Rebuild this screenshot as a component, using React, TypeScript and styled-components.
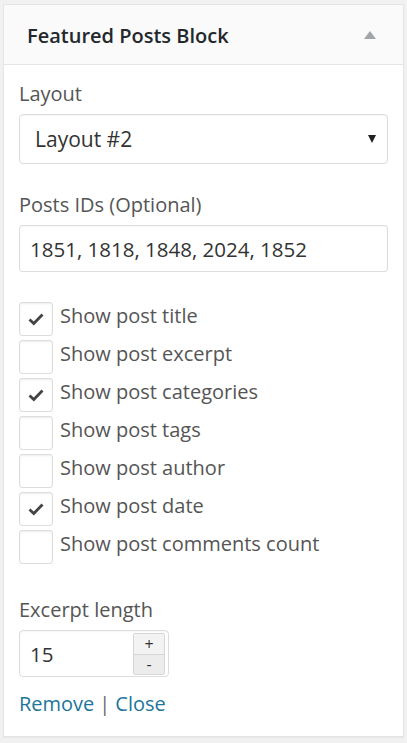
import React from "react";
import styled, { createGlobalStyle } from "styled-components";

const Global = createGlobalStyle`
  html, body { margin: 0; padding: 0; background: #f1f1f1; }
  body { font-family: "Open Sans", "Noto Sans", sans-serif; color: #444; }
  * { box-sizing: border-box; }
`;

const Page = styled.div`
  padding: 4px 3px 6px 3px;
  height: 743px;
`;

const Panel = styled.div`
  background: #fff;
  border: 1px solid #e5e5e5;
  box-shadow: 0 1px 1px rgba(0, 0, 0, 0.04);
  width: 401px;
  height: 733px;
  display: flex;
  flex-direction: column;
`;

const Header = styled.div`
  height: 60px;
  background: #fafafa;
  border-bottom: 1px solid #e5e5e5;
  display: flex;
  align-items: center;
  justify-content: space-between;
  padding: 1px 24px 0 23px;
`;

const Title = styled.h3`
  margin: 0;
  font-size: 20px;
  font-weight: 600;
  color: #23282d;
`;

const Toggle = styled.span`
  width: 0;
  height: 0;
  border-left: 6px solid transparent;
  border-right: 6px solid transparent;
  border-bottom: 8px solid #a0a5aa;
  margin-right: 3px;
`;

const Body = styled.div`
  padding: 15px 15px 0 15px;
  display: flex;
  flex-direction: column;
`;

const Label = styled.div<{ $top?: number }>`
  font-size: 20px;
  line-height: 27px;
  color: #555;
  margin-top: ${(p) => p.$top ?? 0}px;
  margin-bottom: 7px;
`;

const SelectBox = styled.div`
  height: 50px;
  border: 1px solid #ddd;
  border-radius: 4px;
  box-shadow: inset 0 1px 2px rgba(0, 0, 0, 0.04);
  display: flex;
  align-items: center;
  justify-content: space-between;
  padding: 0 11px 0 15px;
  font-size: 21px;
  color: #333;
`;

const Arrow = styled.span`
  width: 0;
  height: 0;
  border-left: 4.5px solid transparent;
  border-right: 4.5px solid transparent;
  border-top: 8px solid #222;
`;

const TextInput = styled.div`
  height: 47px;
  border: 1px solid #ddd;
  border-radius: 3px;
  box-shadow: inset 0 1px 2px rgba(0, 0, 0, 0.04);
  display: flex;
  align-items: center;
  padding: 0 10px;
  font-size: 20.5px;
  color: #333;
`;

const Checks = styled.div`
  margin-top: 30px;
  display: flex;
  flex-direction: column;
  gap: 4px;
`;

const CheckRow = styled.div`
  display: flex;
  align-items: center;
  gap: 7px;
  height: 34px;
`;

const Box = styled.span`
  width: 34px;
  height: 34px;
  border: 1px solid #ddd;
  border-radius: 3px;
  box-shadow: inset 0 1px 2px rgba(0, 0, 0, 0.08);
  display: flex;
  align-items: center;
  justify-content: center;
  flex-shrink: 0;
`;

const CheckText = styled.span`
  font-size: 20px;
  color: #555;
  line-height: 26px;
  margin-top: -7px;
`;

const NumberWrap = styled.div`
  width: 150px;
  height: 47px;
  border: 1px solid #ddd;
  border-radius: 4px;
  box-shadow: inset 0 1px 2px rgba(0, 0, 0, 0.04);
  display: flex;
  align-items: center;
  justify-content: space-between;
  padding: 2px 3px 2px 10px;
`;

const NumberValue = styled.span`
  font-size: 20.5px;
  color: #333;
`;

const Spinner = styled.div`
  width: 32px;
  height: 42px;
  display: flex;
  flex-direction: column;
  border: 1px solid #d6d6d6;
  border-radius: 2px;
`;

const SpinBtn = styled.span<{ $bottom?: boolean }>`
  height: 20px;
  display: flex;
  align-items: center;
  justify-content: center;
  background: ${(p) => (p.$bottom ? "#ececec" : "#f3f3f3")};
  border-top: ${(p) => (p.$bottom ? "1px solid #d6d6d6" : "none")};
  font-size: 16px;
  line-height: 16px;
  color: #333;
`;

const Links = styled.div`
  margin-top: 13px;
  font-size: 20px;
  color: #555;
`;

const Link = styled.a`
  color: #21759b;
  text-decoration: none;
`;

const Sep = styled.span`
  margin: 0 5px;
  color: #666;
`;

const Check = () => (
  <svg width="16" height="14" viewBox="0 0 16 14">
    <path d="M1.5 7.5 L5.8 11.5 L14.5 2.5" fill="none" stroke="#444" strokeWidth="2.8" />
  </svg>
);

const options: [string, boolean][] = [
  ["Show post title", true],
  ["Show post excerpt", false],
  ["Show post categories", true],
  ["Show post tags", false],
  ["Show post author", false],
  ["Show post date", true],
  ["Show post comments count", false],
];

export default function App() {
  return (
    <>
      <Global />
      <Page>
        <Panel>
          <Header>
            <Title>Featured Posts Block</Title>
            <Toggle />
          </Header>
          <Body>
            <Label>Layout</Label>
            <SelectBox>
              <span>Layout #2</span>
              <Arrow />
            </SelectBox>
            <Label $top={27}>Posts IDs (Optional)</Label>
            <TextInput>1851, 1818, 1848, 2024, 1852</TextInput>
            <Checks>
              {options.map(([text, on]) => (
                <CheckRow key={text}>
                  <Box>{on && <Check />}</Box>
                  <CheckText>{text}</CheckText>
                </CheckRow>
              ))}
            </Checks>
            <Label $top={32}>Excerpt length</Label>
            <NumberWrap>
              <NumberValue>15</NumberValue>
              <Spinner>
                <SpinBtn>+</SpinBtn>
                <SpinBtn $bottom>-</SpinBtn>
              </Spinner>
            </NumberWrap>
            <Links>
              <Link href="#">Remove</Link>
              <Sep>|</Sep>
              <Link href="#">Close</Link>
            </Links>
          </Body>
        </Panel>
      </Page>
    </>
  );
}
